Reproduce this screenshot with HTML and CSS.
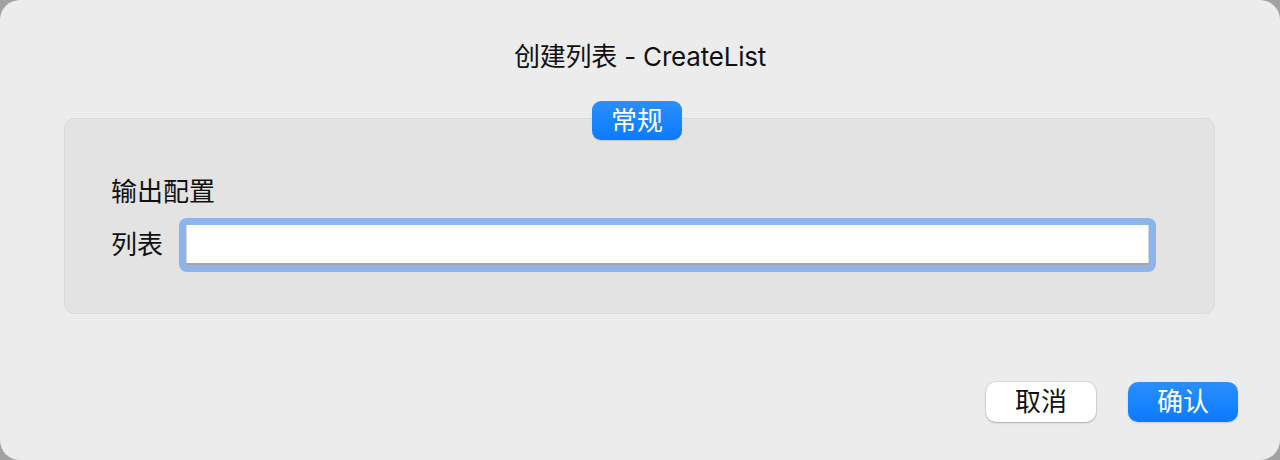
FILE: index.html
```html
<!DOCTYPE html>
<html lang="zh-CN">
<head>
<meta charset="utf-8">
<title>创建列表 - CreateList</title>
<link rel="stylesheet" href="styles.css">
</head>
<body>
<div class="window">
  <div class="title">创建列表 - CreateList</div>
  <div class="group-wrap">
    <div class="group">
      <div class="section-label">输出配置</div>
      <div class="row">
        <label class="row-label" for="list">列表</label>
        <div class="ring"><input class="field" id="list" type="text"></div>
      </div>
    </div>
    <div class="tab">常规</div>
  </div>
  <div class="actions">
    <button class="btn btn-cancel" type="button">取消</button>
    <button class="btn btn-ok" type="button">确认</button>
  </div>
</div>
</body>
</html>
```

FILE: styles.css
```css
html, body {
  margin: 0;
  padding: 0;
  background: #a2a2a2;
}

.window {
  width: 1280px;
  height: 460px;
  box-sizing: border-box;
  background: #ececec;
  border-radius: 20px;
  display: flex;
  flex-direction: column;
  font-family: "Inter", "Noto Sans CJK SC", sans-serif;
  font-size: 26px;
  color: #111111;
  overflow: hidden;
}

.title {
  margin-top: 41px;
  height: 32px;
  line-height: 32px;
  text-align: center;
  letter-spacing: -0.2px;
}

.group-wrap {
  position: relative;
  margin: 45px 65px 0 64px;
}

.group {
  box-sizing: border-box;
  height: 196px;
  border: 1px solid #dadada;
  background: #e3e3e3;
  border-radius: 10px;
  padding: 57px 58px 0 46px;
}

.tab {
  position: absolute;
  top: -17px;
  left: 528px;
  width: 90px;
  height: 39px;
  line-height: 39px;
  text-align: center;
  color: #ffffff;
  border-radius: 9px;
  background: linear-gradient(#2b8ffd, #0a7aff);
  box-shadow: 0 1px 1px rgba(0, 0, 0, 0.12);
}

.section-label {
  height: 32px;
  line-height: 32px;
}

.row {
  display: flex;
  align-items: center;
  gap: 16px;
  margin-top: 10px;
}

.row-label {
  line-height: 32px;
}

.ring {
  flex: 1;
  box-sizing: border-box;
  height: 54px;
  padding: 7px;
  background: #8db4eb;
  border-radius: 8px;
  display: flex;
}

.field {
  flex: 1;
  box-sizing: border-box;
  height: 40px;
  margin: 0;
  border: none;
  outline: none;
  background: #ffffff;
  box-shadow: inset 0 -2px 0 #a6a6a6, inset 1px 0 0 #d4d4d4, inset -1px 0 0 #d4d4d4;
  font: inherit;
  padding: 0 6px;
}

.actions {
  margin-top: auto;
  display: flex;
  justify-content: flex-end;
  gap: 32px;
  padding: 0 42px 38px 0;
}

.btn {
  width: 110px;
  height: 40px;
  margin: 0;
  padding: 0;
  border: none;
  border-radius: 10px;
  font: inherit;
  line-height: 40px;
  text-align: center;
  cursor: default;
}

.btn-cancel {
  background: #ffffff;
  color: #111111;
  box-shadow: 0 0 0 1px rgba(0, 0, 0, 0.06), 0 1px 2px rgba(0, 0, 0, 0.22);
}

.btn-ok {
  background: linear-gradient(#2b8ffd, #0a7aff);
  color: #ffffff;
  box-shadow: 0 1px 2px rgba(0, 0, 0, 0.15);
}
```
